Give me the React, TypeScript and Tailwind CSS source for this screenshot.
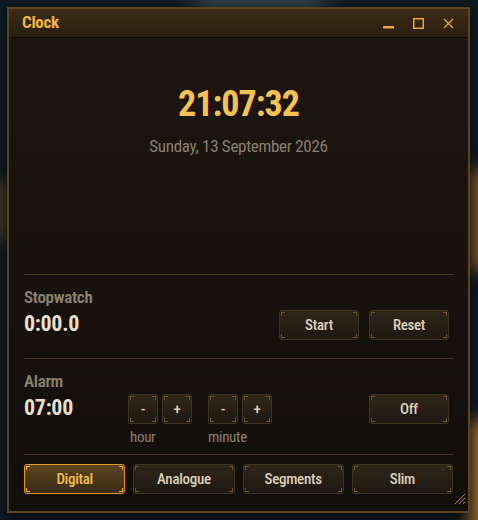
const Corners = ({ color }: { color: string }) => (
  <>
    <span className={`absolute left-[1px] top-[1px] h-[4px] w-[4px] border-l border-t ${color}`} />
    <span className={`absolute right-[1px] top-[1px] h-[4px] w-[4px] border-r border-t ${color}`} />
    <span className={`absolute bottom-[1px] left-[1px] h-[4px] w-[4px] border-b border-l ${color}`} />
    <span className={`absolute bottom-[1px] right-[1px] h-[4px] w-[4px] border-b border-r ${color}`} />
  </>
);

const Btn = ({ label, className = "", active = false }: { label: string; className?: string; active?: boolean }) => (
  <button
    className={
      "relative flex h-[30px] items-center justify-center rounded-[3px] border text-[15px] font-medium " +
      (active
        ? "border-[#e49a22] bg-gradient-to-b from-[#5b4520] to-[#3a2b14] text-[#f4be4e] "
        : "border-[#3f3320] bg-gradient-to-b from-[#2f2619] to-[#1f1912] text-[#dccfbb] ") +
      className
    }
  >
    <Corners color={active ? "border-[#f0b040]" : "border-[#6b5228]"} />
    {label}
  </button>
);

const Divider = () => <div className="h-px bg-[#4b3a1c]" />;

export default function App() {
  return (
    <div className="relative h-[520px] w-[478px] overflow-hidden bg-[#0e1a21] font-['Roboto_Condensed','Roboto',sans-serif] tracking-[-0.3px]">
      {/* desktop backdrop */}
      <div className="absolute left-[190px] top-[-20px] h-[30px] w-[140px] rounded-full bg-[#3a4a50] blur-md" />
      <div className="absolute right-[-14px] top-[170px] h-[100px] w-[24px] bg-[#7a5424] blur-sm" />
      <div className="absolute right-[-14px] top-[420px] h-[110px] w-[24px] bg-[#9a6a2c] blur-sm" />
      <div className="absolute left-[-14px] top-[180px] h-[60px] w-[22px] bg-[#4a3a22] blur-sm" />

      <div className="relative ml-[7px] mt-[7px] flex h-[506px] w-[463px] flex-col overflow-hidden border-2 border-[#5a4422] bg-gradient-to-b from-[#1e1711] to-[#120e0a] shadow-[0_4px_12px_rgba(0,0,0,0.6)]">
        {/* title bar */}
        <div className="flex h-[29px] items-center justify-between border-b border-[#0e0a06] bg-gradient-to-b from-[#3b2b15] to-[#2a1f11] pl-[13px] pr-[14px]">
          <span className="text-[17px] font-bold text-[#f0b443]">Clock</span>
          <div className="flex items-center gap-[19px] text-[#eea52c]">
            <svg width="11" height="11" viewBox="0 0 11 11">
              <rect x="0" y="8" width="11" height="2.5" fill="currentColor" />
            </svg>
            <svg width="11" height="11" viewBox="0 0 11 11">
              <rect x="0.75" y="0.75" width="9.5" height="9.5" fill="none" stroke="currentColor" strokeWidth="1.5" />
            </svg>
            <svg width="11" height="11" viewBox="0 0 11 11">
              <path d="M1 1L10 10M10 1L1 10" stroke="currentColor" strokeWidth="1.3" />
            </svg>
          </div>
        </div>

        <div className="flex flex-1 flex-col px-[15px]">
          {/* clock face */}
          <div className="mt-[48px] flex flex-col items-center">
            <div className="text-[36px] font-bold leading-none tracking-[-1px] text-[#f6c252]">21:07:32</div>
            <div className="mt-[14px] text-[17px] leading-[20px] text-[#8a7f70]">Sunday, 13 September 2026</div>
          </div>

          <div className="flex-1" />
          <Divider />

          {/* stopwatch */}
          <div className="pb-[18px] pt-[12px]">
            <div className="text-[17px] font-semibold leading-[20px] text-[#8c8272]">Stopwatch</div>
            <div className="mt-[3px] flex items-start justify-between">
              <div className="text-[22px] font-bold leading-[28px] text-[#e8dfcd]">0:00.0</div>
              <div className="mr-[4px] flex gap-[10px]">
                <Btn label="Start" className="w-[80px]" />
                <Btn label="Reset" className="w-[80px]" />
              </div>
            </div>
          </div>
          <Divider />

          {/* alarm */}
          <div className="flex items-start pb-[9px] pt-[12px]">
            <div className="w-[104px]">
              <div className="text-[17px] font-semibold leading-[20px] text-[#8c8272]">Alarm</div>
              <div className="mt-[3px] text-[22px] font-bold leading-[28px] text-[#e8dfcd]">07:00</div>
            </div>
            <div className="mt-[23px] flex flex-col">
              <div className="flex gap-[4px]">
                <Btn label="-" className="w-[30px]" />
                <Btn label="+" className="w-[30px]" />
              </div>
              <span className="ml-[2px] mt-[5px] text-[15px] leading-[16px] text-[#8c8272]">hour</span>
            </div>
            <div className="ml-[16px] mt-[23px] flex flex-col">
              <div className="flex gap-[4px]">
                <Btn label="-" className="w-[30px]" />
                <Btn label="+" className="w-[30px]" />
              </div>
              <span className="mt-[5px] text-[15px] leading-[16px] text-[#8c8272]">minute</span>
            </div>
            <div className="flex-1" />
            <Btn label="Off" className="mr-[4px] mt-[23px] w-[80px]" />
          </div>
          <Divider />

          {/* face selector */}
          <div className="grid grid-cols-4 gap-[8px] pb-[17px] pt-[9px]">
            <Btn label="Digital" active />
            <Btn label="Analogue" />
            <Btn label="Segments" />
            <Btn label="Slim" />
          </div>
        </div>

        {/* resize grip */}
        <svg className="absolute bottom-[6px] right-[2px]" width="14" height="14" viewBox="0 0 14 14">
          <path d="M13 3L3 13M13 7L7 13M13 11L11 13" stroke="#c98a2a" strokeWidth="1" />
        </svg>
      </div>
    </div>
  );
}
